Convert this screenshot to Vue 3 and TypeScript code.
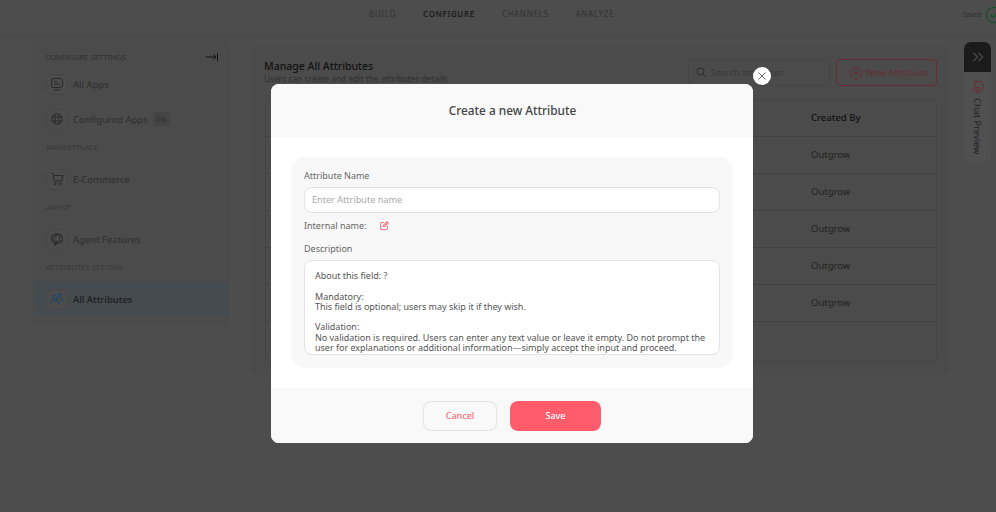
<script setup lang="ts">
const rows = [1, 2, 3, 4, 5];
const description = `About this field: ?

Mandatory:
This field is optional; users may skip it if they wish.

Validation:
No validation is required. Users can enter any text value or leave it empty. Do not prompt the user for explanations or additional information—simply accept the input and proceed.`;
</script>

<template>
  <div class="page">
    <header class="topbar">
      <nav class="tabs">
        <span>BUILD</span>
        <span class="active">CONFIGURE</span>
        <span>CHANNELS</span>
        <span>ANALYZE</span>
      </nav>
      <div class="saved">
        <span>Saved</span>
        <svg width="18" height="18" viewBox="0 0 18 18" fill="none" stroke="#1a4f2e" stroke-width="1.4"><circle cx="9" cy="9" r="7.6" /><path d="M5.5 9l2.6 2.6 5-5.6" /></svg>
      </div>
    </header>

    <div class="content">
      <aside class="sidebar">
        <div class="side-head">
          <span>CONFIGURE SETTINGS</span>
          <svg width="12" height="8" viewBox="0 0 12 8" fill="none" stroke="#111" stroke-width="1"><path d="M0 4h10M7.5 1.5L10 4 7.5 6.5M11.5 0v8" /></svg>
        </div>
        <div class="side-item">
          <span class="ico"><svg width="14" height="14" viewBox="0 0 14 14" fill="none" stroke="#2a2a2a" stroke-width="1"><rect x="1.5" y="1.5" width="11" height="9" rx="2" /><path d="M4 4.5h3M4 7h6M4 12.8h6" /></svg></span>
          All Apps
        </div>
        <div class="side-item">
          <span class="ico"><svg width="14" height="14" viewBox="0 0 14 14" fill="none" stroke="#2a2a2a" stroke-width="1"><circle cx="7" cy="7" r="5.2" /><path d="M1.8 5h10.4M1.8 9h10.4M5 2v10M9 2v10" /></svg></span>
          Configured Apps <em class="count">04</em>
        </div>
        <div class="side-label">MARKETPLACE</div>
        <div class="side-item">
          <span class="ico"><svg width="14" height="14" viewBox="0 0 14 14" fill="none" stroke="#2a2a2a" stroke-width="1"><path d="M1 1.5h2l1.4 7.5h7L13 3.5H3.4" /><circle cx="5" cy="11.8" r="1" /><circle cx="10.6" cy="11.8" r="1" /></svg></span>
          E-Commerce
        </div>
        <div class="side-label">AGENT</div>
        <div class="side-item">
          <span class="ico"><svg width="14" height="14" viewBox="0 0 14 14" fill="none" stroke="#2a2a2a" stroke-width="1.2"><ellipse cx="7" cy="6.5" rx="5.4" ry="4.6" /><path d="M4.5 10.5L5 13l2.5-2" /><circle cx="7" cy="6.5" r="2.8" stroke-width=".8" /></svg></span>
          Agent Features
        </div>
        <div class="side-label">ATTRIBUTES SETTING</div>
        <div class="side-item selected">
          <span class="ico"><svg width="14" height="14" viewBox="0 0 14 14" fill="none" stroke="#1a4a6b" stroke-width="1.1"><circle cx="5" cy="5.5" r="2" /><path d="M1.3 12c0-2.4 1.6-3.7 3.7-3.7S8.7 9.6 8.7 12" /><circle cx="10" cy="3" r="1.4" /><path d="M9.5 6.5c2 0 3.3 1 3.5 3" /></svg></span>
          All Attributes
        </div>
      </aside>

      <main class="panel">
        <div class="panel-head">
          <div>
            <h2>Manage All Attributes</h2>
            <p>Users can create and edit the attributes details</p>
          </div>
          <div class="actions">
            <div class="search">
              <svg width="11" height="11" viewBox="0 0 11 11" fill="none" stroke="#2a2a2a" stroke-width="1"><circle cx="4.5" cy="4.5" r="3.5" /><path d="M7.2 7.2L10 10" /></svg>
              Search attributes
            </div>
            <div class="new-btn">
              <svg width="14" height="14" viewBox="0 0 14 14" fill="none" stroke="#6a2a32" stroke-width="1"><circle cx="7" cy="7" r="6" /><path d="M7 4v6M4 7h6" /></svg>
              New Attribute
            </div>
          </div>
        </div>
        <div class="table">
          <div class="row head"><span>Created By</span></div>
          <div v-for="r in rows" :key="r" class="row"><span>Outgrow</span></div>
        </div>
      </main>

      <aside class="chat">
        <div class="chat-top">
          <svg width="12" height="10" viewBox="0 0 12 10" fill="none" stroke="#444" stroke-width="1.6"><path d="M1.5 1l4 4-4 4M6.5 1l4 4-4 4" /></svg>
        </div>
        <div class="chat-body">
          <svg width="12" height="14" viewBox="0 0 12 14" fill="none" stroke="#6a2a32" stroke-width="1"><path d="M3 1.5h5.5L11 4v5.5l-3 3H4l-3-3L2.500 7z" /><circle cx="6" cy="9" r="1.8" /></svg>
          <span>Chat Preview</span>
        </div>
      </aside>
    </div>

    <div class="overlay">
      <div class="modal">
        <button class="close" type="button">
          <svg width="8" height="8" viewBox="0 0 8 8" fill="none" stroke="#666" stroke-width="1"><path d="M.5.5l7 7M7.5.5l-7 7" /></svg>
        </button>
        <div class="modal-head">Create a new Attribute</div>
        <div class="modal-body">
          <div class="form-card">
            <label>Attribute Name</label>
            <input class="name-input" type="text" placeholder="Enter Attribute name" />
            <div class="internal">
              <label>Internal name:</label>
              <svg width="9" height="9" viewBox="0 0 9 9" fill="none" stroke="#ff7280" stroke-width="1.1"><path d="M7.5 5v2A1.5 1.5 0 0 1 6 8.5H2A1.5 1.5 0 0 1 .5 7V3A1.5 1.5 0 0 1 2 1.5h2" /><path d="M3.5 5.5V4.3L7 .8 8.2 2 4.7 5.5z" /></svg>
            </div>
            <label>Description</label>
            <textarea class="desc" readonly :value="description"></textarea>
          </div>
        </div>
        <div class="modal-foot">
          <button class="cancel" type="button">Cancel</button>
          <button class="save" type="button">Save</button>
        </div>
      </div>
    </div>
  </div>
</template>

<style>
body {
  background: #4d4d4d;
}
</style>

<style scoped>
/* the page sits behind the modal, so its colours are already the dimmed ones */
.page {
  width: 996px;
  height: 512px;
  overflow: hidden;
  position: relative;
  background: #4d4d4d;
  font-family: "Noto Sans", "Open Sans", sans-serif;
  color: #222;
}
.topbar {
  height: 36px;
  box-sizing: border-box;
  border-bottom: 1px solid #474747;
  display: flex;
  align-items: center;
  justify-content: flex-end;
  position: relative;
}
.tabs {
  position: absolute;
  left: 369px;
  top: 8px;
  display: flex;
  gap: 27px;
  font-size: 8px;
  font-weight: 500;
  letter-spacing: .6px;
  color: #363636;
}
.tabs .active {
  color: #1c1c1c;
  font-weight: 600;
}
.saved {
  display: flex;
  align-items: center;
  gap: 4px;
  font-size: 6.5px;
  color: #2e2e2e;
  margin-right: -7px;
  margin-top: -6px;
}
.content {
  display: flex;
  align-items: flex-start;
  padding: 6px 5px 0 33px;
}
.sidebar {
  width: 197px;
  height: 283px;
  box-sizing: border-box;
  flex: none;
  background: #4b4b4b;
  border: 1px solid #494949;
  border-radius: 7px;
  font-size: 9.5px;
  padding-top: 9px;
}
.side-head {
  display: flex;
  justify-content: space-between;
  align-items: center;
  padding: 0 11px;
  font-size: 7.7px;
  height: 10px;
  color: #2e2e2e;
  margin-bottom: 5px;
}
.side-item {
  height: 33px;
  box-sizing: border-box;
  display: flex;
  align-items: center;
  gap: 5px;
  padding: 1px 0 0 12px;
  margin-bottom: 2px;
  color: #2e2e2e;
}
.side-item.selected {
  background: #464b4f;
  color: #1c1c1c;
  font-weight: 500;
}
.ico {
  width: 22px;
  height: 21px;
  box-sizing: border-box;
  background: #4c4c4c;
  border: 1px solid #464646;
  border-radius: 7px;
  display: flex;
  align-items: center;
  justify-content: center;
}
.count {
  font-style: normal;
  font-size: 7.5px;
  background: #444;
  padding: 2px 4px;
  border-radius: 3px;
  letter-spacing: .4px;
}
.side-label {
  font-size: 7.7px;
  color: #383838;
  height: 10px;
  padding-left: 12px;
  margin: 7px 0 10px;
}
.panel {
  width: 700px;
  height: 330px;
  box-sizing: border-box;
  flex: none;
  margin: 3px 0 0 20px;
  padding: 14px 13px 0 14px;
  background: #4b4b4b;
  border-radius: 10px;
}
.panel-head {
  display: flex;
  justify-content: space-between;
  height: 40px;
}
.panel-head h2 {
  margin: 0;
  font-size: 10.5px;
  font-weight: 500;
  color: #111;
}
.panel-head p {
  margin: 0;
  font-size: 8.4px;
  color: #2e2e2e;
}
.actions {
  display: flex;
  gap: 6px;
}
.search {
  width: 142px;
  height: 27px;
  box-sizing: border-box;
  border: 1px solid #444;
  border-radius: 5px;
  display: flex;
  align-items: center;
  gap: 4px;
  padding-left: 7px;
  font-size: 9px;
  color: #383838;
}
.new-btn {
  width: 101px;
  height: 27px;
  box-sizing: border-box;
  border: 1px solid #6a2a32;
  border-radius: 4px;
  display: flex;
  align-items: center;
  gap: 3px;
  padding-left: 12px;
  font-size: 9.5px;
  color: #642e35;
}
.table {
  width: 672px;
  height: 263px;
  margin-left: 1px;
  box-sizing: border-box;
  border: 1px solid #444;
  border-radius: 6px;
  font-size: 9.5px;
  color: #222;
}
.row {
  height: 37px;
  box-sizing: border-box;
  border-bottom: 1px solid #424242;
  display: flex;
  align-items: center;
  padding: 0 0 1px 545px;
}
.row.head {
  color: #111;
  font-weight: 500;
}
.overlay {
  position: fixed;
  inset: 0;
  display: flex;
  align-items: flex-start;
  padding: 84px 0 0 271px;
}
.modal {
  width: 482px;
  height: 359px;
  position: relative;
  background: #fff;
  border-radius: 8px;
  display: flex;
  flex-direction: column;
}
.close {
  position: absolute;
  top: -17px;
  right: -18px;
  width: 18px;
  height: 18px;
  padding: 0;
  border: 0;
  border-radius: 50%;
  background: #fff;
  display: flex;
  align-items: center;
  justify-content: center;
}
.modal-head {
  height: 53px;
  box-sizing: border-box;
  flex: none;
  background: #f9f9f9;
  border-radius: 8px 8px 0 0;
  display: flex;
  align-items: center;
  justify-content: center;
  font-size: 11.8px;
  font-weight: 500;
  color: #444;
  padding: 0 0 1px 1px;
}
.modal-body {
  flex: 1;
  padding: 20px;
}
.form-card {
  height: 211px;
  box-sizing: border-box;
  background: #f8f8f8;
  border-radius: 14px;
  padding: 12px 13px;
  display: flex;
  flex-direction: column;
}
label {
  font-size: 9px;
  line-height: 13px;
  color: #666;
}
.name-input {
  height: 26px;
  box-sizing: border-box;
  margin-top: 5px;
  border: 1px solid #e3e3e3;
  border-radius: 8px;
  padding: 0 7px 1px;
  font-family: inherit;
  font-size: 9.1px;
  background: #fff;
  outline: none;
}
.name-input::placeholder {
  color: #aaa;
}
.internal {
  display: flex;
  align-items: center;
  gap: 14px;
  margin: 6px 0 10px;
}
.desc {
  height: 95px;
  box-sizing: border-box;
  margin-top: 5px;
  border: 1px solid #e3e3e3;
  border-radius: 8px;
  padding: 10px;
  font-family: inherit;
  font-size: 9px;
  letter-spacing: -.02px;
  line-height: 10.3px;
  color: #555;
  background: #fff;
  resize: none;
  overflow: hidden;
  outline: none;
}
.modal-foot {
  height: 55px;
  flex: none;
  background: #f9f9f9;
  border-radius: 0 0 8px 8px;
  display: flex;
  justify-content: center;
  gap: 13px;
  padding-top: 13px;
  box-sizing: border-box;
}
.modal-foot button {
  height: 30px;
  padding: 0 0 2px;
  font-family: inherit;
  font-size: 9px;
  font-weight: 500;
  border-radius: 8px;
}
.cancel {
  width: 74px;
  background: transparent;
  border: 1px solid #e3e3e3;
  color: #ff6b78;
}
.save {
  width: 91px;
  background: #ff5c6c;
  border: 0;
  color: #fff;
}
.chat {
  width: 27px;
  height: 121px;
  flex: none;
  margin-left: 14px;
  border-radius: 7px;
  overflow: hidden;
  background: #505050;
}
.chat-top {
  height: 30px;
  background: #1b1b1b;
  display: flex;
  align-items: center;
  justify-content: center;
}
.chat-body {
  display: flex;
  flex-direction: column;
  align-items: center;
  gap: 4px;
  padding-top: 8px;
  font-size: 9.3px;
  color: #222;
}
.chat-body span {
  writing-mode: vertical-rl;
}
</style>
